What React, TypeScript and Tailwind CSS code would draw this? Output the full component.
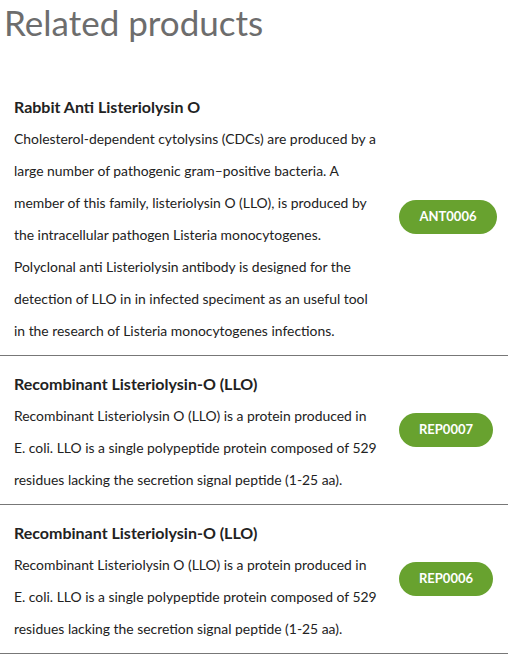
const products = [
	{
		title: "Rabbit Anti Listeriolysin O",
		lines: [
			"Cholesterol-dependent cytolysins (CDCs) are produced by a",
			"large number of pathogenic gram–positive bacteria. A",
			"member of this family, listeriolysin O (LLO), is produced by",
			"the intracellular pathogen Listeria monocytogenes.",
			"Polyclonal anti Listeriolysin antibody is designed for the",
			"detection of LLO in in infected speciment as an useful tool",
			"in the research of Listeria monocytogenes infections.",
		],
		code: "ANT0006",
		wide: true,
	},
	{
		title: "Recombinant Listeriolysin-O (LLO)",
		lines: [
			"Recombinant Listeriolysin O (LLO) is a protein produced in",
			"E. coli. LLO is a single polypeptide protein composed of 529",
			"residues lacking the secretion signal peptide (1-25 aa).",
		],
		code: "REP0007",
		wide: false,
	},
	{
		title: "Recombinant Listeriolysin-O (LLO)",
		lines: [
			"Recombinant Listeriolysin O (LLO) is a protein produced in",
			"E. coli. LLO is a single polypeptide protein composed of 529",
			"residues lacking the secretion signal peptide (1-25 aa).",
		],
		code: "REP0006",
		wide: false,
	},
];

export default function App() {
	return (
		<div className="w-[512px] bg-white font-['Lato','Liberation_Sans',sans-serif]">
			<h2 className="pl-[4px] pt-[2px] text-[35px] leading-[40px] text-[#6d6d6d] h-[95px]">
				Related products
			</h2>

			{products.map((item, i) => (
				<div
					key={i}
					className={`${
						i == 0 ? "" : "pt-[16px]"
					} w-[508px] flex flex-row items-center border-b border-[#777777] pb-[8px]`}
				>
					<div className="pl-[14px] w-[385px]">
						<h3 className="text-[16px] leading-[24px] font-bold text-[#222222]">
							{item.title}
						</h3>
						<p className="mt-[4px] text-[13.9px] leading-[32px] text-[#222222]">
							{item.lines.map((l, j) => (
								<span key={j} className="block whitespace-nowrap">
									{l}
								</span>
							))}
						</p>
					</div>
					<div className="flex-1 flex justify-start pl-[14px] mb-[8px]">
						<span
							className={`${
								item.wide ? "w-[98px]" : "w-[94px]"
							} h-[34px] rounded-full bg-[#68a22f] text-white text-[13px] font-bold flex items-center justify-center`}
						>
							{item.code}
						</span>
					</div>
				</div>
			))}
		</div>
	);
}
